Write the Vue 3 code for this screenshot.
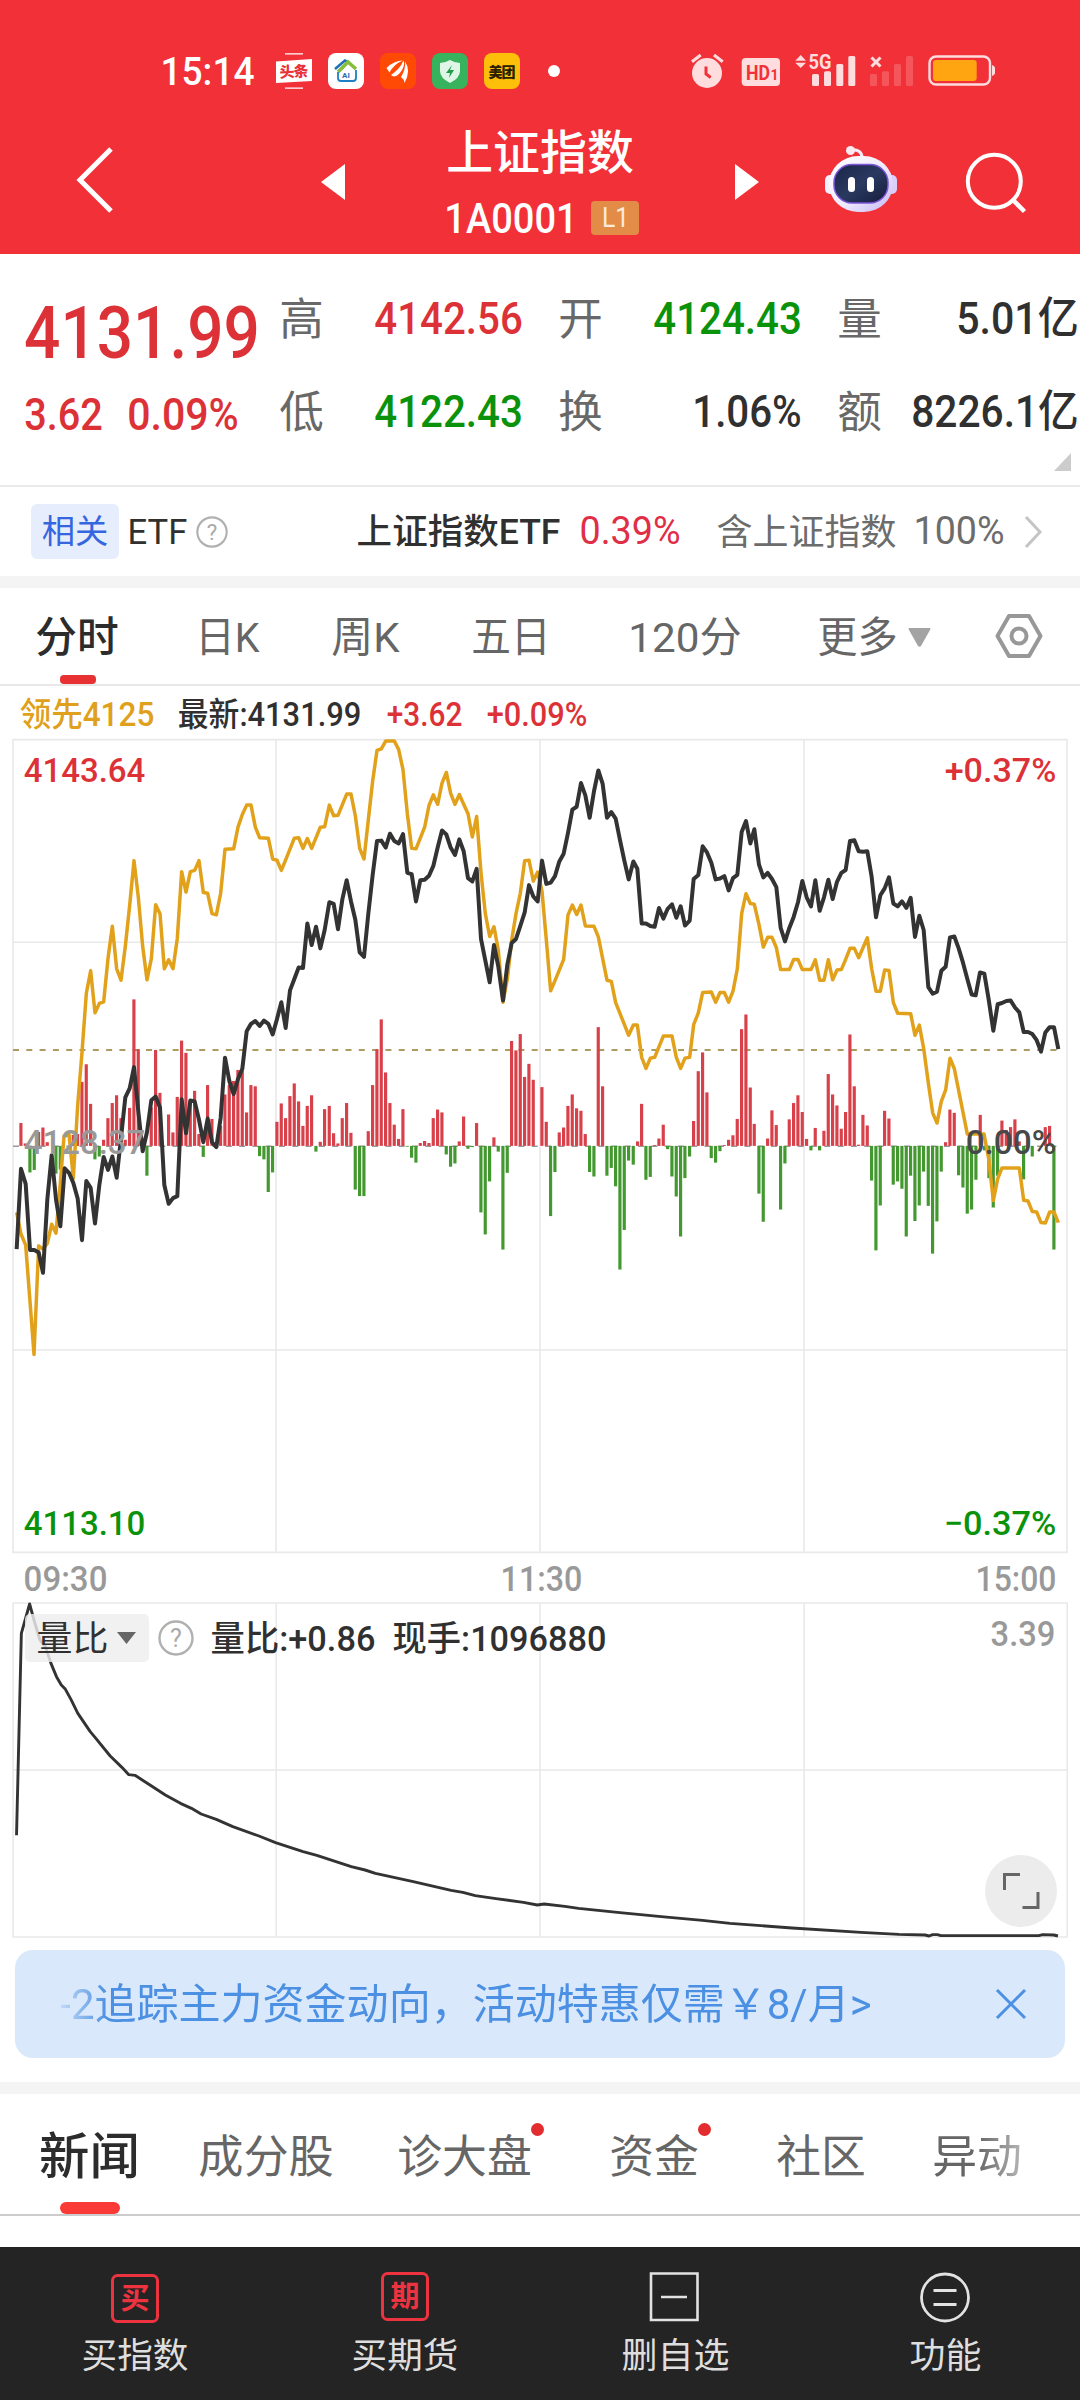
<script setup>
import { h } from 'vue'

// One line of text squeezed to a given width, centred on its cap height
const Txt = ({ t, w, s, b = 400 }) => {
  const pad = s * 0.04
  return h('svg', { class: 'txt', width: w, height: s }, [
    h('text', {
      x: -pad,
      y: s * 0.856,
      textLength: Number(w) + pad * 2,
      lengthAdjust: 'spacingAndGlyphs',
      'font-size': s,
      'font-weight': b,
      fill: 'currentColor'
    }, t)
  ])
}
Txt.props = ['t', 'w', 's', 'b']

const quotes = [
  { label: '高', value: '4142.56', w: 145, cls: 'up' },
  { label: '开', value: '4124.43', w: 145, cls: 'down' },
  { label: '量', value: '5.01亿', w: 119 },
  { label: '低', value: '4122.43', w: 145, cls: 'down' },
  { label: '换', value: '1.06%', w: 106 },
  { label: '额', value: '8226.1亿', w: 164 }
]

const periods = [
  { t: '分时', w: 80, active: true },
  { t: '日K', w: 61 },
  { t: '周K', w: 65 },
  { t: '五日', w: 76 },
  { t: '120分', w: 110 },
  { t: '更多', w: 77, more: true }
]

const newsTabs = [
  { t: '新闻', w: 97, active: true },
  { t: '成分股', w: 132 },
  { t: '诊大盘', w: 131, dot: true },
  { t: '资金', w: 86, dot: true },
  { t: '社区', w: 86 },
  { t: '异动', w: 86, fade: true }
]

// Series are stored per part of the session: [x offset, 'x,y x,y ...']
const read = (parts) =>
  parts.flatMap(([dx, text]) =>
    text.trim().split(/\s+/).map((p) => {
      const [x, y] = p.split(',').map(Number)
      return [x + dx, y]
    })
  )
const toPoints = (parts) => read(parts).map((p) => p.join(',')).join(' ')

const price = toPoints([
  [0, '50,1272 63,1075 77,1112 90,1274 103,1274 116,1280 129,1330 142,1150 155,1042 168,1150 181,1216 194,1074 207,1085 220,1110 233,1148 246,1250 259,1105 272,1122 285,1209 298,1115 311,1046 324,1078 337,1045 350,1097 363,1000 376,900 389,878 402,826 415,935 428,1032 441,985 454,907 467,898 480,925 493,1115 506,1161 519,1147 532,1142 545,905 558,988 571,908 584,910 597,955 610,1010 623,952 636,1010 649,1022 662,950 675,803 688,860 701,892 714,855 727,830 740,738 753,720 766,713 779,725 792,712 805,720 818,746 831,708 844,667 857,730 870,638 883,610 896,582 909,583 922,474 935,527 948,482 961,535 974,490 988,422 1001,426 1014,488 1027,415 1040,368 1053,420 1066,465 1079,545'],
  [810, '282,556 295,450 308,355 321,272 334,271 347,288 360,254 373,272 386,278 399,255 412,350 425,353 438,420 451,368 464,367 477,357 490,333 503,288 516,246 529,256 542,288 555,306 568,268 581,297 594,363 607,371 620,340 633,512 646,565 659,618 672,527 685,580 699,663 712,575 725,522 738,512 751,480 764,447 777,380 790,408 803,420 816,320 829,377 842,374 855,358 868,322 881,303 894,252 907,195 920,188 933,130 946,160 959,215 972,150 985,99 998,132 1011,215 1024,201 1037,217 1050,270 1063,320 1076,366'],
  [1620, '280,322 292,340 305,474 318,474 331,480 344,482 357,436 370,462 383,438 396,427 409,460 422,432 435,479 449,467 461,365 475,355 488,285 501,300 514,325 527,366 540,364 553,358 566,393 579,363 592,355 605,250 618,223 631,278 643,243 657,330 670,361 683,350 696,365 709,385 722,485 735,518 748,485 761,458 774,422 787,370 800,410 813,432 826,368 839,443 852,410 865,367 878,414 891,372 904,350 917,343 930,272 943,270 956,297 969,298 982,297 995,360 1008,459 1021,405 1034,388 1047,361'],
  [2340, '340,425 353,432 366,420 379,436 392,411 405,507 418,455 431,490 445,630 458,646 471,641 484,590 497,580 510,508 523,506 536,535 549,570 562,610 575,648 587,650 600,594 613,597 626,660 640,737 653,672 666,669 679,664 692,663 705,680 718,692 731,740 744,740 757,745 770,760 783,788 796,741 809,728 822,728 835,782']
])

const lead = toPoints([
  [0, '50,1182 63,1235 77,1262 90,1400 102,1530 116,1264 129,1272 142,1258 155,1211 168,1233 181,1110 192,995 207,990 220,1098 233,920 246,790 259,645 272,590 285,693 298,670 311,666 324,560 337,481 350,585 363,613 376,530 389,430 402,320 415,410 428,530 441,612 454,560 467,428 480,450 493,585 506,563 519,585 532,510 545,347 558,397 571,347 584,344 597,320 610,398 623,400 636,450 649,453 662,400 675,292 701,291 714,238 727,207 740,184 753,184 766,238 779,264 805,265 818,316 831,319 844,344 857,318 883,265 896,264 909,290 922,266 935,290 961,238 974,237 988,184 1001,210 1014,209 1040,157 1053,157 1066,210 1079,290'],
  [810, '282,316 295,220 308,125 321,50 334,46 347,27 373,27 386,48 399,97 412,205 425,290 438,291 464,238 477,185 490,159 503,182 516,130 529,104 542,155 555,182 568,158 581,182 594,205 607,262 620,212 633,350 646,450 659,506 672,482 685,540 699,667 712,610 725,515 738,450 751,400 764,320 777,319 790,370 803,348 816,395 829,515 842,639 855,614 881,562 894,453 907,429 920,452 933,429 946,480 972,481 985,507 998,560 1011,613 1024,616 1037,668 1076,748'],
  [1620, '280,723 292,723 305,802 318,829 331,804 344,802 370,750 396,750 409,802 422,829 435,804 449,802 461,722 475,693 488,643 514,642 527,667 540,643 553,643 566,667 579,640 592,585 605,450 618,401 631,425 643,427 657,477 670,532 683,508 696,508 709,533 722,587 748,587 761,562 774,562 787,587 813,587 826,563 839,613 852,613 865,563 878,612 891,588 904,587 917,562 930,535 943,535 956,558 982,509 995,585 1008,640 1021,640 1034,588 1047,589'],
  [2340, '340,668 353,694 392,695 405,748 418,723 431,780 445,865 458,938 471,963 484,910 497,882 510,804 523,830 562,990 612,990 626,1050 640,1153 653,1100 666,1073 718,1073 731,1152 744,1154 757,1180 770,1181 783,1207 796,1208 809,1181 822,1181 835,1207']
])

const zero = 1019
const bars = read([
  [0, '63,963 76,1013 90,1084 103,1078 116,985 129,974 142,1010 168,1087 181,1077 220,992 233,990 246,862 259,819 272,916 285,1052 298,1045 311,1004 324,951 337,914 350,895 363,951 376,1004 389,926 402,660 415,782 441,1092 454,925 467,784 480,889 506,942 519,986 532,899 545,761 558,791 571,908 584,884 597,990 610,1046 623,870 636,953 662,970 675,893 688,870 701,860 714,833 727,835 740,937 753,870 766,873 779,1044 792,1052 805,1132 818,1084 831,960 844,915 857,951 870,897 883,866 896,910 909,970 922,921 935,895 948,1033 961,1009 974,929 988,921 1001,988 1014,1013 1027,951 1040,914 1053,987 1066,1126'],
  [810, '269,1142 282,1142 295,983 308,870 321,782 334,709 347,839 360,914 373,967 386,1002 399,929 412,1021 425,1048 438,1060 451,1012 464,1007 477,1012 490,951 503,930 516,937 529,1040 542,1070 555,1062 568,1008 581,947 594,1026 607,1022 620,963 633,1182 646,1236 659,1106 672,998 685,1033 699,1273 712,1085 725,762 738,785 751,745 764,850 777,818 790,857 816,875 829,960 842,1191 855,1083 868,986 881,974 894,921 907,893 920,927 933,933 946,990 959,1083 972,1094 985,728 998,873 1011,1092 1024,1073 1037,1118 1050,1322 1063,1225 1076,1055'],
  [1620, '280,1065 293,1008 305,916 318,1102 331,1095 344,1017 357,1001 370,967 383,1027 396,1094 409,1143 422,1241 435,1098 449,1045 461,958 475,836 488,790 501,888 514,1049 527,1060 540,1032 553,1017 566,1004 579,993 592,953 605,733 618,697 631,876 643,965 657,1136 670,1205 683,1001 696,932 709,968 722,1175 735,1062 748,954 761,914 774,895 787,936 800,1002 813,1030 826,975 839,1030 852,982 865,843 878,893 891,920 904,977 917,936 930,746 943,873 956,1016 969,943 982,969 995,1104 1008,1275 1021,1165 1034,933 1047,952'],
  [2340, '340,1114 353,1106 366,1124 379,1241 392,1092 405,1203 418,1165 431,1082 445,1166 458,1283 471,1204 484,1082 497,1010 510,930 523,938 536,1091 549,1121 562,1185 575,1175 588,1102 601,943 614,1030 627,1098 640,1170 653,1092 666,957 679,980 692,973 705,954 718,1008 731,1101 757,1045 796,973 809,970 822,1273']
])

const volumeRatio = '24,1006 31,400 43,312 50,365 58,420 66,440 74,490 82,530 89,555 95,568 103,598 113,640 131,695 138,712 160,768 177,802 187,824 196,826 220,858 240,885 262,910 278,925 292,942 314,958 338,980 376,1008 400,1028 440,1055 460,1066 510,1100 530,1110 545,1120 600,1145 655,1171 672,1177 690,1187 720,1196 760,1207 780,1215 790,1212 820,1219 840,1225 900,1238 960,1250 1020,1261 1060,1270 1150,1284 1250,1297 1305,1303 1343,1305 1349,1308 1354,1304 1361,1304 1366,1307 1508,1307 1514,1304 1530,1305 1536,1308'
</script>

<template>
  <div class="page">
    <header class="header">
      <div class="status">
        <Txt class="clock" t="15:14" w="91" s="38" b="500" />
        <div class="apps">
          <svg width="36" height="36" viewBox="0 0 36 36">
            <path d="M9 .8h18M9 35.2h18" stroke="#fff" stroke-width="1.2" />
            <path d="M0 8.500 36 6v22L0 30z" fill="#fff" />
            <text x="3.500" y="24" font-size="15" font-weight="900" textLength="29" fill="#e8333b" transform="rotate(-3 18 18)">头条</text>
          </svg>
          <svg width="36" height="36" viewBox="0 0 36 36">
            <rect width="36" height="36" rx="8" fill="#fff" />
            <path d="M7 16 17 7.500l4 2" fill="none" stroke="#1d6fb8" stroke-width="2.500" />
            <path d="M10 19 20 9l8 7" fill="none" stroke="#86bd3b" stroke-width="3.500" />
            <path d="M10 19v6q0 3 3 3h12q3 0 3-3v-8" fill="none" stroke="#1d7fc4" stroke-width="1.800" />
            <text x="14" y="24.500" font-size="8" font-weight="700" fill="#1d6fb8">AI</text>
          </svg>
          <svg width="36" height="36" viewBox="0 0 36 36">
            <rect width="36" height="36" rx="8" fill="#ff4a05" />
            <path d="M6.500 15Q14 7.500 23 7.500 14 11 9.500 19.500zM11 22Q20 16 23.500 7.500q2.500 5-4 13-2 2.500-6 3zM21 24q5-8 4-15.500 6.500 9-.5 21.500-.5-4-3.500-6z" fill="#fff" />
          </svg>
          <svg width="36" height="36" viewBox="0 0 36 36">
            <rect width="36" height="36" rx="8" fill="#36b35c" />
            <path d="M18 7q5 3 10 3v8q0 7-10 12Q8 25 8 18v-8q5 0 10-3z" fill="#dff6e7" />
            <path d="M20 12l-6 8h4l-1 5 5-8h-4z" fill="#249b49" />
          </svg>
          <svg width="36" height="36" viewBox="0 0 36 36">
            <rect width="36" height="36" rx="8" fill="#fdbf0a" />
            <text x="4.500" y="23.500" font-size="14" font-weight="900" textLength="27" fill="#2a2000">美团</text>
          </svg>
        </div>
        <i class="more-dot"></i>
        <svg class="system" width="304" height="36" viewBox="0 0 304 36" fill="#ffdcde">
          <circle cx="15" cy="20" r="15" />
          <path d="M0 8.700 8.700 2M22 2l8.700 6.700" stroke="#ffdcde" stroke-width="3.200" />
          <path d="M14 13.500V21l4.700 3.500" fill="none" stroke="#f23038" stroke-width="3" />
          <rect x="49.700" y="5" width="38.300" height="28" rx="4" />
          <text x="54" y="27" font-size="21" font-weight="700" textLength="24" lengthAdjust="spacingAndGlyphs" fill="#f23038">HD</text>
          <text x="78.500" y="27" font-size="14" font-weight="700" fill="#f23038">1</text>
          <path d="M108.700 2 114 7.700H103.300zM103.300 9.700H114l-5.300 5.300z" />
          <text x="116.500" y="16.300" font-size="21" font-weight="700" textLength="23" lengthAdjust="spacingAndGlyphs">5G</text>
          <rect x="120" y="21" width="7" height="12" rx="1.500" />
          <rect x="132" y="18.300" width="7" height="14.700" rx="1.500" />
          <rect x="144.300" y="11" width="7" height="22" rx="1.500" />
          <rect x="156.300" y="3" width="7" height="30" rx="1.500" />
          <path d="m179.500 4.500 9 9m0-9-9 9" stroke="#ffdcde" stroke-width="3" />
          <g opacity=".22">
            <rect x="178" y="21" width="7" height="12" rx="1.500" />
            <rect x="190" y="18.300" width="7" height="14.700" rx="1.500" />
            <rect x="202" y="11" width="7" height="22" rx="1.500" />
            <rect x="214" y="3" width="7" height="30" rx="1.500" />
          </g>
          <rect x="237.500" y="3.500" width="60.500" height="28" rx="6.500" fill="none" stroke="#ffdcde" stroke-width="2.400" />
          <rect x="241" y="7" width="43.700" height="21" rx="3" fill="#ffa512" />
          <path d="M300 12q3 1 3 3v5q0 2-3 3z" />
        </svg>
      </div>

      <div class="title-row">
        <svg class="back" width="40" height="68" viewBox="0 0 40 68">
          <path d="M36 3 5 34l31 31" fill="none" stroke="#fff" stroke-width="5" />
        </svg>
        <svg class="prev" width="24" height="36"><path d="M24 0v36L0 18z" fill="#fff" /></svg>
        <div class="title">
          <Txt t="上证指数" w="184" s="46.500" b="500" />
          <div class="code">
            <Txt t="1A0001" w="130" s="42" b="500" />
            <span class="level"><Txt t="L1" w="25" s="27" /></span>
          </div>
        </div>
        <svg class="next" width="24" height="36"><path d="M0 0v36l24-18z" fill="#fff" /></svg>
        <svg class="robot" width="72" height="67" viewBox="0 0 72 67">
          <defs>
            <linearGradient id="shell" x1="0" y1="0" x2="1" y2="1">
              <stop offset="0" stop-color="#fff" />
              <stop offset=".55" stop-color="#f0ebfd" />
              <stop offset="1" stop-color="#c3b6f5" />
            </linearGradient>
            <linearGradient id="visor" x1="0" y1="0" x2="1" y2="1">
              <stop offset="0" stop-color="#1b2448" />
              <stop offset=".5" stop-color="#2a3960" />
              <stop offset="1" stop-color="#151d3c" />
            </linearGradient>
          </defs>
          <path d="M26 4q11-1 11 8" fill="none" stroke="#f6e9f6" stroke-width="3.200" />
          <circle cx="25.500" cy="4.500" r="4.500" fill="#fbe9f1" />
          <rect y="29" width="12" height="19" rx="5" fill="#f3effe" />
          <rect x="60" y="29" width="12" height="19" rx="5" fill="#d9cffa" />
          <rect x="4" y="10" width="64" height="56" rx="29" fill="url(#shell)" />
          <rect x="9" y="18.500" width="54" height="38.500" rx="18" fill="url(#visor)" stroke="#7c55d8" stroke-width="1.500" />
          <rect x="23" y="31" width="7" height="15" rx="3.500" fill="#fff" />
          <rect x="42" y="31" width="7" height="15" rx="3.500" fill="#fff" />
        </svg>
        <svg class="search" width="62" height="62" viewBox="0 0 62 62" fill="none" stroke="#fff" stroke-width="4">
          <circle cx="29.300" cy="30.300" r="26.500" />
          <path d="m48.500 49.500 11 11" stroke-width="4.500" />
        </svg>
      </div>
    </header>

    <section class="quote">
      <div class="last up">
        <Txt t="4131.99" w="230" s="73" b="500" />
        <div class="change">
          <Txt t="3.62" w="75" s="45" b="500" />
          <Txt t="0.09%" w="108" s="45" b="500" />
        </div>
      </div>
      <div class="cells">
        <div v-for="q in quotes" :key="q.label" class="cell">
          <Txt class="label" :t="q.label" w="41" s="44" />
          <Txt :class="q.cls" :t="q.value" :w="q.w" s="44.500" b="500" />
        </div>
      </div>
      <svg class="corner" width="17" height="18"><path d="M17 0v18H0z" fill="#ccc" /></svg>
    </section>

    <section class="related">
      <span class="tag"><Txt t="相关" w="64" s="33" /></span>
      <Txt class="etf" t="ETF" w="57" s="35" />
      <svg class="help" width="32" height="32" viewBox="0 0 36 36">
        <circle cx="18" cy="18" r="16.500" />
        <text x="18" y="26.500" text-anchor="middle">?</text>
      </svg>
      <Txt class="name" t="上证指数ETF" w="201" s="35" b="500" />
      <Txt class="pct" t="0.39%" w="98" s="38" />
      <Txt class="contain" t="含上证指数" w="177" s="36" />
      <Txt class="share" t="100%" w="88" s="38" />
      <svg width="18" height="32" viewBox="0 0 18 32"><path d="m2 1 14 15L2 31" fill="none" stroke="#c4c4c4" stroke-width="3" /></svg>
    </section>

    <nav class="periods">
      <div v-for="p in periods" :key="p.t" class="period" :class="{ active: p.active }">
        <Txt :t="p.t" :w="p.w" s="41.500" :b="p.active ? 500 : 400" />
        <svg v-if="p.more" width="23" height="19"><path d="M1 0h21q1 1 0 2L13 18q-1.500 1.500-3 0L1 2Q0 1 1 0z" fill="#a3a3a3" /></svg>
      </div>
      <svg width="48" height="46" viewBox="0 0 48 46" fill="none" stroke="#989898" stroke-width="4">
        <path d="M14 3h20l11.500 20L34 43H14L2.500 23z" stroke-linejoin="round" />
        <circle cx="24" cy="23" r="7.500" />
      </svg>
    </nav>

    <div class="legend">
      <Txt class="gold" t="领先4125" w="132" s="33" b="500" />
      <Txt t="最新:4131.99" w="181" s="33" b="500" />
      <Txt class="up" t="+3.62" w="73" s="33" b="500" />
      <Txt class="up" t="+0.09%" w="98" s="33" b="500" />
    </div>

    <section class="chart">
      <svg class="plot" viewBox="0 22 3240 1997" preserveAspectRatio="none">
        <path class="grid" d="M39 23.500H3201V2015H39zM828 23V2015M1620 23V2015M2412 23V2015M39 520H3201M39 1519H3201" />
        <path class="dash-base" d="M39 1020H3180" />
        <path class="dash-last" d="M39 784H3175" />
        <rect
          v-for="([x, y], i) in bars"
          :key="i"
          :x="x - 5"
          :y="Math.min(y, zero)"
          width="9.500"
          :height="Math.max(Math.abs(y - zero), 2)"
          :fill="y < zero ? '#d8404a' : '#43982f'"
        />
        <polyline class="line lead" :points="lead" />
        <polyline class="line price" :points="price" />
      </svg>
      <Txt class="mark tl up" t="4143.64" w="119" s="34" b="500" />
      <Txt class="mark tr up" t="+0.37%" w="109" s="34" b="500" />
      <Txt class="mark ml" t="4128.37" w="119" s="34" b="500" />
      <Txt class="mark mr" t="0.00%" w="88" s="34" b="500" />
      <Txt class="mark bl down" t="4113.10" w="119" s="34" b="500" />
      <Txt class="mark br down" t="−0.37%" w="110" s="34" b="500" />
    </section>

    <div class="axis">
      <Txt t="09:30" w="81" s="35" b="500" />
      <Txt t="11:30" w="79" s="35" b="500" />
      <Txt t="15:00" w="78" s="35" b="500" />
    </div>

    <section class="sub-chart">
      <svg class="plot" viewBox="0 306 1568 1008" preserveAspectRatio="none">
        <path class="grid" d="M19 309H1549.500V1311H19zM401 309V1311M784 309V1311M1167.500 309V1311M19 810H1549.500" />
        <polyline class="line thin" :points="volumeRatio" />
      </svg>
      <div class="indicator">
        <span class="pick">
          <Txt t="量比" w="69" s="35" />
          <svg width="19" height="12"><path d="M0 0h19L9.500 12z" fill="#666" /></svg>
        </span>
        <svg class="help" width="36" height="36" viewBox="0 0 36 36">
          <circle cx="18" cy="18" r="16.500" />
          <text x="18" y="26.500" text-anchor="middle">?</text>
        </svg>
        <Txt t="量比:+0.86" w="162" s="35" b="500" />
        <Txt t="现手:1096880" w="211" s="35" b="500" />
        <Txt class="peak" t="3.39" w="62" s="35" b="500" />
      </div>
      <span class="expand">
        <svg width="38" height="38" viewBox="0 0 38 38" fill="none" stroke="#666" stroke-width="3">
          <path d="M2.500 18V2.500H18M36 20v15.500H20.500" />
        </svg>
      </span>
    </section>

    <div class="banner">
      <Txt class="promo" t="-2追踪主力资金动向，活动特惠仅需￥8/月>" w="809" s="42" />
      <svg width="30" height="30" viewBox="0 0 30 30"><path d="m1 1 28 28m0-28L1 29" stroke="#4b90e2" stroke-width="3" /></svg>
    </div>

    <nav class="news">
      <div v-for="n in newsTabs" :key="n.t" class="news-tab" :class="{ active: n.active, fade: n.fade }">
        <Txt :t="n.t" :w="n.w" :s="n.active ? 49.5 : 45" :b="n.active ? 500 : 400" />
        <i v-if="n.dot" class="dot"></i>
      </div>
    </nav>

    <footer class="footer">
      <div class="action">
        <svg width="50" height="52" viewBox="0 0 50 52">
          <rect x="2.500" y="3.500" width="45" height="46" rx="5" fill="none" stroke="#ee3340" stroke-width="3" />
          <text x="25" y="37" text-anchor="middle" font-size="29" font-weight="700" fill="#ee3340">买</text>
        </svg>
        <Txt t="买指数" w="104" s="35.500" />
      </div>
      <div class="action">
        <svg width="50" height="52" viewBox="0 0 50 52">
          <rect x="2.500" y="1.500" width="45" height="46" rx="5" fill="none" stroke="#ee3340" stroke-width="3" />
          <text x="25" y="35" text-anchor="middle" font-size="29" font-weight="700" fill="#ee3340">期</text>
        </svg>
        <Txt t="买期货" w="104" s="35.500" />
      </div>
      <div class="action">
        <svg width="50" height="52" viewBox="0 0 50 52" fill="none" stroke="#e2e2e2" stroke-width="2.600">
          <path d="M1 1.500h46.500v46.500H1zM11 25h26" />
        </svg>
        <Txt t="删自选" w="105" s="35.500" />
      </div>
      <div class="action">
        <svg width="50" height="52" viewBox="0 0 50 52" fill="none" stroke="#e2e2e2" stroke-width="2.800">
          <circle cx="25" cy="25.500" r="23.500" />
          <path d="M13.500 18.500h23M13.500 32.500h23" />
        </svg>
        <Txt t="功能" w="69" s="35.500" />
      </div>
    </footer>
  </div>
</template>

<style>
body {
  background: #fff;
}
</style>

<style scoped>
.page {
  width: 1080px;
  height: 2400px;
  display: flex;
  flex-direction: column;
  overflow: hidden;
  background: #fff;
  color: #303030;
  font-family: Roboto, "Noto Sans CJK SC", sans-serif;
}

svg {
  display: block;
  flex: none;
  overflow: visible;
}

.up {
  color: #dc3237;
}

.down {
  color: #0b920b;
}

/* Header */
.header {
  height: 254px;
  background: #f23038;
  color: #fff;
}

.status {
  display: flex;
  align-items: center;
  height: 36px;
  padding: 53px 0 0 162px;
}

.apps {
  display: flex;
  gap: 16px;
  margin-left: 23px;
}

.more-dot {
  width: 12px;
  height: 12px;
  margin-left: 28px;
  border-radius: 50%;
  background: #fff;
}

.system {
  margin-left: 132px;
}

.title-row {
  display: grid;
  grid-template-columns: 246px 78px 336px 90px 141px 1fr;
  align-items: center;
  height: 150px;
  padding: 18px 0 0 75px;
}

.back {
  margin-bottom: 5px;
}

.title {
  display: flex;
  flex-direction: column;
  gap: 25px;
  margin-left: 49px;
}

.code {
  display: flex;
  align-items: center;
  gap: 15px;
  height: 34px;
  margin-left: -2px;
}

.level {
  display: flex;
  align-items: center;
  justify-content: center;
  width: 48px;
  height: 34px;
  border-radius: 4px;
  background: #e28c48;
  color: #fdebdc;
}

.robot {
  margin-bottom: 6px;
}

.search {
  margin-left: -1px;
}

/* Quote */
.quote {
  position: relative;
  display: flex;
  height: 231px;
  border-bottom: 2px solid #ebebeb;
}

.last {
  width: 254px;
  padding: 41px 0 0 27px;
}

.change {
  display: flex;
  gap: 28px;
  margin: 23px 0 0 -1px;
}

.cells {
  display: grid;
  grid-template-columns: 240px 240px 240px;
  column-gap: 39px;
  grid-auto-rows: 93px;
  padding-top: 18px;
}

.cell {
  display: flex;
  align-items: center;
  justify-content: space-between;
}

.cell:nth-child(3n) {
  padding-right: 2px;
}

.label {
  color: #686868;
}

.corner {
  position: absolute;
  right: 9px;
  bottom: 14px;
}

/* Related ETF */
.related {
  display: flex;
  align-items: center;
  height: 89px;
  padding-left: 31px;
  border-bottom: 12px solid #f4f4f4;
}

.tag {
  display: flex;
  align-items: center;
  justify-content: center;
  width: 88px;
  height: 55px;
  border-radius: 6px;
  background: #e6edfc;
  color: #3665e0;
}

.etf {
  margin-left: 10px;
}

.help {
  margin-left: 10px;
  fill: none;
  stroke: #b0b0b0;
  stroke-width: 2.4;
}

.help text {
  fill: #aaa;
  stroke: none;
  font-size: 25px;
}

.name {
  margin-left: 130px;
}

.pct {
  margin-left: 22px;
  margin-bottom: 4px;
  color: #e02e46;
}

.contain {
  margin-left: 39px;
  color: #6c6c6c;
}

.share {
  margin: 0 21px 4px 20px;
  color: #6c6c6c;
}

/* Periods */
.periods {
  display: grid;
  grid-template-columns: 160px 136px 140px 157px 189px 176px 1fr;
  align-items: center;
  height: 96px;
  padding-left: 37px;
  border-bottom: 2px solid #e8e8e8;
}

.period {
  position: relative;
  display: flex;
  align-items: center;
  gap: 12px;
  height: 94px;
  padding-top: 2px;
  color: #666;
}

.period.active {
  color: #2c2c2c;
}

.period.active::after {
  content: "";
  position: absolute;
  left: 23px;
  bottom: 0;
  width: 36px;
  height: 9px;
  border-radius: 4px;
  background: #e73132;
}

/* Charts */
.legend {
  display: grid;
  grid-template-columns: 158px 209px 100px auto;
  align-items: center;
  height: 53px;
  padding: 4px 0 0 21px;
  box-sizing: border-box;
}

.gold {
  color: #dfa01c;
}

.chart {
  position: relative;
  height: 815px;
}

.plot {
  width: 100%;
  height: 100%;
}

.plot path,
.plot polyline {
  fill: none;
  vector-effect: non-scaling-stroke;
}

.grid {
  stroke: #e9e9e9;
  stroke-width: 1.6;
}

.dash-base {
  stroke: #999;
  stroke-width: 1.5;
  stroke-dasharray: 6 7.3;
}

.dash-last {
  stroke: #ad9c62;
  stroke-width: 1.8;
  stroke-dasharray: 6 7.3;
}

.line {
  stroke: #333;
  stroke-width: 4;
  stroke-linejoin: round;
}

.line.lead {
  stroke: #e2a11a;
  stroke-width: 3.5;
}

.line.thin {
  stroke-width: 2.9;
}

.mark {
  position: absolute;
}

.tl,
.bl,
.ml {
  left: 25px;
}

.tr,
.br,
.mr {
  right: 25px;
}

.tl,
.tr {
  top: 14px;
}

.ml,
.mr {
  top: 386px;
  color: #999;
}

.mr {
  color: #484848;
}

.bl,
.br {
  top: 767px;
}

.axis {
  display: flex;
  align-items: center;
  justify-content: space-between;
  height: 48px;
  padding: 0 25px;
  color: #999;
}

.sub-chart {
  position: relative;
  height: 336px;
}

.indicator {
  position: absolute;
  top: 12px;
  left: 25px;
  right: 26px;
  display: flex;
  align-items: center;
}

.indicator .help {
  margin: 0 18px 0 9px;
}

.indicator .help + .txt {
  margin-right: 20px;
}

.pick {
  display: flex;
  align-items: center;
  gap: 10px;
  width: 111px;
  height: 48px;
  padding-left: 13px;
  border-radius: 5px;
  background: rgba(238, 238, 238, 0.82);
}

.peak {
  margin: 0 0 9px auto;
  color: #999;
}

.expand {
  position: absolute;
  right: 23px;
  bottom: 11px;
  display: flex;
  align-items: center;
  justify-content: center;
  width: 72px;
  height: 72px;
  border-radius: 50%;
  background: #ececec;
}

/* Banner */
.banner {
  display: flex;
  align-items: center;
  justify-content: space-between;
  height: 108px;
  margin: 12px 15px 24px;
  padding: 0 39px 0 42px;
  box-sizing: border-box;
  border-radius: 18px;
  background: #dae8fb;
  color: #4b90e2;
}

.promo {
  overflow: hidden;
  padding: 8px 4px;
  mask-image: linear-gradient(to right, rgba(0, 0, 0, 0.1), #000 50px);
}

/* News tabs */
.news {
  display: grid;
  grid-template-columns: 159px 199px 212px 167px 156px 1fr;
  height: 120px;
  padding-left: 41px;
  border-top: 12px solid #f4f4f4;
  border-bottom: 2px solid #ccc;
}

.news-tab {
  position: relative;
  display: flex;
  align-items: center;
  padding-top: 4px;
  justify-self: start;
  color: #666;
}

.news-tab.active {
  padding-top: 6px;
  color: #2c2c2c;
}

.news-tab.active::after {
  content: "";
  position: absolute;
  left: 19px;
  bottom: 0;
  width: 60px;
  height: 12px;
  border-radius: 6px;
  background: #fa3a36;
}

.news-tab.fade {
  mask-image: linear-gradient(to right, #000 50%, rgba(0, 0, 0, 0.5));
}

.dot {
  position: absolute;
  top: 29px;
  right: -14px;
  width: 13px;
  height: 13px;
  border-radius: 50%;
  background: #e22c2e;
}

/* Footer */
.footer {
  display: grid;
  grid-template-columns: repeat(4, 1fr);
  height: 153px;
  margin-top: auto;
  background: #242424;
  color: #dedede;
}

.action {
  display: flex;
  flex-direction: column;
  align-items: center;
  gap: 14px;
  padding-top: 25px;
}
</style>
